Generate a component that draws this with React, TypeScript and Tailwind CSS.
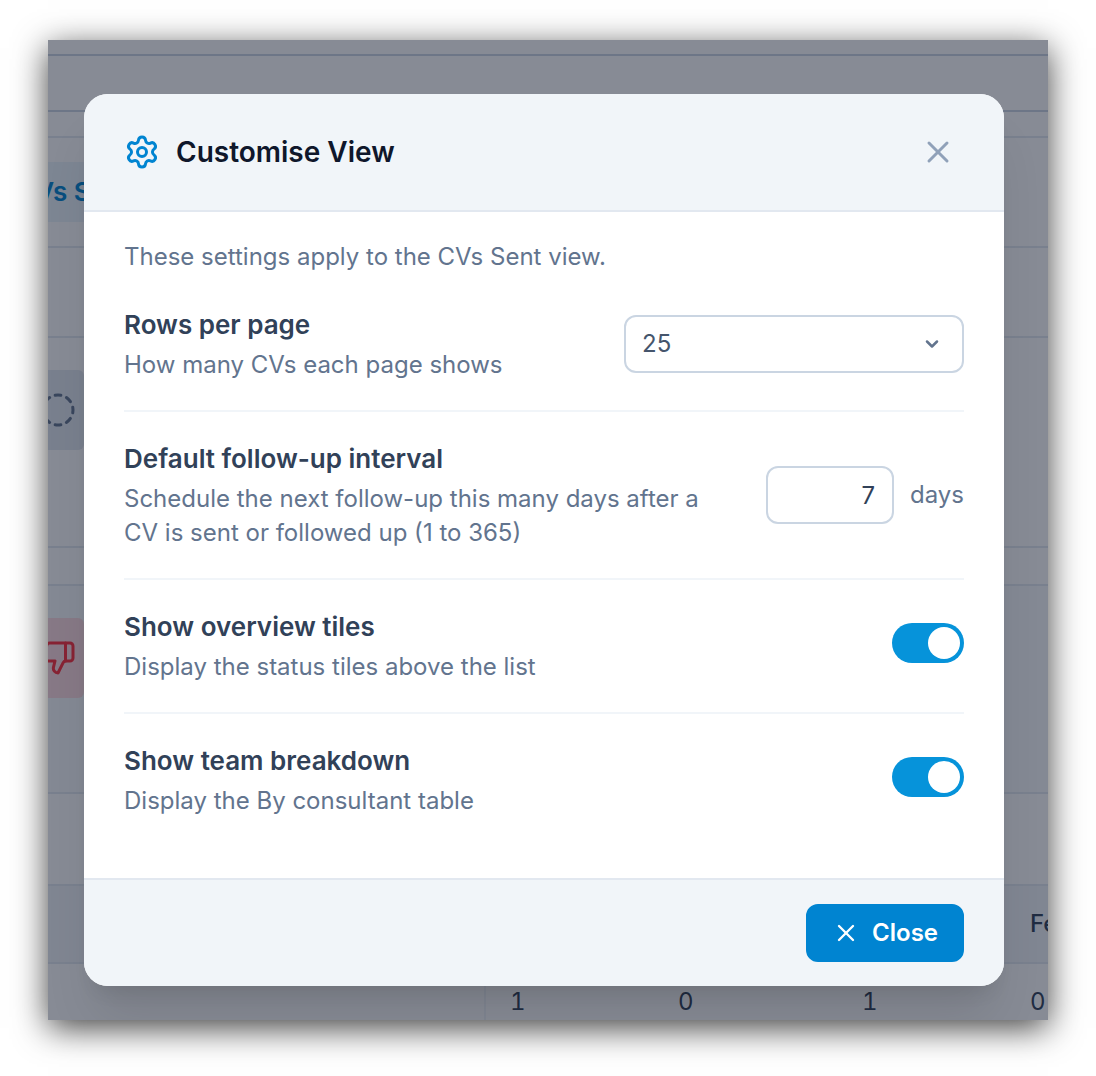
import { useState } from "react";
import type { ReactNode } from "react";
import { ChevronDown, CircleDashed, Settings, ThumbsDown, X } from "lucide-react";

type SettingRowProps = {
  id: string;
  title: string;
  description: string;
  children: ReactNode;
};

const SettingRow = ({ id, title, description, children }: SettingRowProps) => (
  <div className="flex items-center justify-between gap-10 border-b-2 border-slate-100 py-7 first:pt-0 last:border-b-0">
    <div>
      <label htmlFor={id} className="block text-[26px] leading-[38px] font-semibold text-slate-700">
        {title}
      </label>
      <p id={`${id}-hint`} className="mt-1 text-2xl leading-[34px] text-slate-500">
        {description}
      </p>
    </div>
    {children}
  </div>
);

type ToggleProps = {
  id: string;
  checked: boolean;
  onChange: (value: boolean) => void;
};

const Toggle = ({ id, checked, onChange }: ToggleProps) => (
  <div className="flex shrink-0 pb-1.5">
    <input
      id={id}
      type="checkbox"
      role="switch"
      aria-describedby={`${id}-hint`}
      checked={checked}
      onChange={(e) => onChange(e.target.checked)}
      className="h-10 w-[72px] cursor-pointer appearance-none rounded-full bg-slate-300 p-1 transition-colors before:block before:size-8 before:rounded-full before:bg-white before:transition-transform checked:bg-[#0693da] checked:before:translate-x-8"
    />
  </div>
);

// The page that sits dimmed behind the dialog
const PageBehind = () => (
  <div aria-hidden="true" className="col-start-1 row-start-1 min-w-0 overflow-hidden bg-white">
    <div className="h-4 border-b-2 border-slate-300" />
    <div className="h-14 border-b-2 border-slate-300" />
    <div className="h-[26px] border-b-2 border-slate-200" />
    <div className="flex h-[110px] items-center border-b-2 border-slate-200">
      <span className="-ml-8 bg-[#eaf4fa] py-3 pr-6 text-[26px] leading-9 font-semibold text-sky-600">
        CVs Sent
      </span>
    </div>
    <div className="h-[90px] border-b-2 border-slate-200" />
    <div className="h-[210px] border-b-2 border-slate-200 pt-8">
      <div className="flex h-20 w-9 items-center justify-end rounded-r-md bg-slate-200 pr-2">
        <CircleDashed className="size-9 shrink-0 text-slate-500" />
      </div>
    </div>
    <div className="h-[38px] border-b-2 border-slate-200" />
    <div className="h-[208px] border-b-2 border-slate-200 bg-slate-50 pt-8">
      <div className="flex h-20 w-9 items-center justify-end rounded-r-md bg-[#ffdbe0] pr-2">
        <ThumbsDown className="size-9 shrink-0 text-[#ff2f3c]" />
      </div>
    </div>
    <div className="h-[92px] border-b-2 border-slate-200" />
    <table className="w-full table-fixed border-separate border-spacing-0 text-left text-2xl text-slate-700 tabular-nums">
      <thead>
        <tr className="h-[78px] bg-slate-100">
          <th className="w-[438px] border-b-2 border-slate-200" />
          <th className="w-[168px] border-b-2 border-slate-200" />
          <th className="w-[184px] border-b-2 border-slate-200" />
          <th className="w-[168px] border-b-2 border-slate-200" />
          <th className="border-b-2 border-slate-200 pl-6 font-medium">Fe</th>
        </tr>
      </thead>
      <tbody>
        <tr className="h-14">
          <td className="border-r-2 border-slate-100" />
          <td className="pt-5 pl-6">1</td>
          <td className="pt-5 pl-6">0</td>
          <td className="pt-5 pl-6">1</td>
          <td className="pt-5 pl-6">0</td>
        </tr>
      </tbody>
    </table>
  </div>
);

const App = () => {
  const [rows, setRows] = useState("25");
  const [interval, setFollowUpInterval] = useState("7");
  const [showTiles, setShowTiles] = useState(true);
  const [showTeam, setShowTeam] = useState(true);

  return (
    <main className="min-h-screen bg-white px-12 pt-10 pb-14 font-['Inter',sans-serif]">
      <div className="grid grid-cols-1 overflow-hidden shadow-[0_8px_32px_rgba(0,0,0,0.75)]">
        <PageBehind />

        <div className="relative col-start-1 row-start-1 bg-slate-900/50 pt-[54px] pr-11 pb-[34px] pl-9">
          <section
            role="dialog"
            aria-modal="true"
            aria-labelledby="dialog-title"
            className="overflow-hidden rounded-3xl bg-white shadow-[0_40px_50px_-10px_rgba(0,0,0,0.1),0_16px_20px_-12px_rgba(0,0,0,0.1)]"
          >
            {/* Header */}
            <header className="flex items-center justify-between border-b-2 border-slate-200 bg-slate-100 px-10 py-8">
              <div className="flex items-center gap-4">
                <Settings className="size-9 text-sky-600" />
                <h2 id="dialog-title" className="text-[28px] leading-10 font-semibold text-slate-900">
                  Customise View
                </h2>
              </div>
              <button type="button" aria-label="Dismiss" className="rounded-lg p-2 text-slate-400 hover:text-slate-600">
                <X className="size-9" />
              </button>
            </header>

            {/* Settings */}
            <div className="px-10 pt-7 pb-8">
              <p className="mb-8 text-2xl leading-[34px] text-slate-500">
                These settings apply to the CVs Sent view.
              </p>
              <div>
                <SettingRow id="rows" title="Rows per page" description="How many CVs each page shows">
                  <div className="relative w-[340px] shrink-0">
                    <select
                      id="rows"
                      aria-describedby="rows-hint"
                      value={rows}
                      onChange={(e) => setRows(e.target.value)}
                      className="block h-[58px] w-full appearance-none rounded-xl border-2 border-slate-300 bg-white px-4 text-2xl text-slate-600"
                    >
                      <option value="25">25</option>
                    </select>
                    <ChevronDown
                      strokeWidth={3}
                      className="pointer-events-none absolute inset-y-0 right-[22px] my-auto size-5 text-slate-500"
                    />
                  </div>
                </SettingRow>

                <SettingRow
                  id="interval"
                  title="Default follow-up interval"
                  description="Schedule the next follow-up this many days after a CV is sent or followed up (1 to 365)"
                >
                  <div className="flex shrink-0 items-center gap-4">
                    <input
                      id="interval"
                      type="number"
                      min={1}
                      max={365}
                      aria-describedby="interval-hint"
                      value={interval}
                      onChange={(e) => setFollowUpInterval(e.target.value)}
                      className="h-[58px] w-32 rounded-xl border-2 border-slate-300 bg-white px-4 text-right text-2xl text-slate-700 tabular-nums [&::-webkit-inner-spin-button]:appearance-none"
                    />
                    <span className="text-2xl text-slate-500">days</span>
                  </div>
                </SettingRow>

                <SettingRow id="tiles" title="Show overview tiles" description="Display the status tiles above the list">
                  <Toggle id="tiles" checked={showTiles} onChange={setShowTiles} />
                </SettingRow>

                <SettingRow id="team" title="Show team breakdown" description="Display the By consultant table">
                  <Toggle id="team" checked={showTeam} onChange={setShowTeam} />
                </SettingRow>
              </div>
            </div>

            {/* Footer */}
            <footer className="flex justify-end border-t-2 border-slate-200 bg-slate-100 px-10 py-6">
              <button
                type="button"
                className="flex h-[58px] items-center gap-3 rounded-xl border-2 border-sky-600 bg-sky-600 px-6 text-2xl font-semibold text-white hover:bg-sky-700"
              >
                <X className="size-7" />
                Close
              </button>
            </footer>
          </section>
        </div>
      </div>
    </main>
  );
};

export default App;
